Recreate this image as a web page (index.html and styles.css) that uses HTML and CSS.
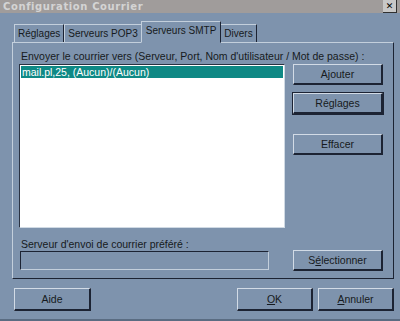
FILE: index.html
```html
<html>
<head>
  <title>Configuration Courrier</title>
  <link rel="stylesheet" href="styles.css">
</head>
<body>
  <div class="window">
    <div class="titlebar">
      <span class="title">Configuration Courrier</span>
      <span class="close">&#x2715;</span>
    </div>
    <div class="dialog">
      <div class="tabs">
        <div class="tab">Réglages</div>
        <div class="tab">Serveurs POP3</div>
        <div class="tab active">Serveurs SMTP</div>
        <div class="tab">Divers</div>
      </div>
      <div class="panel">
        <div class="label">Envoyer le courrier vers (Serveur, Port, Nom d'utilisateur / Mot de passe) :</div>
        <div class="servers">
          <ul class="list">
            <li class="selected">mail.pl,25, (Aucun)/(Aucun)</li>
          </ul>
          <div class="actions">
            <button class="btn">Ajouter</button>
            <button class="btn default">Réglages</button>
            <button class="btn gap">Effacer</button>
          </div>
        </div>
        <div class="label pref">Serveur d'envoi de courrier préféré :</div>
        <div class="prefrow">
          <div class="field"></div>
          <button class="btn">S<u>é</u>lectionner</button>
        </div>
      </div>
      <div class="footer">
        <button class="btn wide">Aide</button>
        <div class="right">
          <button class="btn wide"><u>O</u>K</button>
          <button class="btn wide"><u>A</u>nnuler</button>
        </div>
      </div>
    </div>
  </div>
</body>
</html>
```

FILE: styles.css
```css
body {
  margin: 0;
  background: #7e93ad;
  font: 10.5px "Liberation Sans", Arial, sans-serif;
  color: #161a20;
}
.window {
  width: 400px;
  height: 321px;
  box-sizing: border-box;
  border-bottom: 2px solid #5a6c82;
}
.titlebar {
  height: 13px;
  background: #a09c9b;
  display: flex;
  justify-content: space-between;
  align-items: center;
}
.title {
  margin-left: 3px;
  font: bold 10px "DejaVu Sans", sans-serif;
  letter-spacing: 0.6px;
  color: #d4d4d4;
}
.close {
  width: 13px;
  height: 12px;
  margin-right: 3px;
  background: #c8c8c8;
  border-right: 1px solid #303030;
  border-bottom: 1px solid #303030;
  font: bold 9px "DejaVu Sans", sans-serif;
  text-align: center;
  line-height: 12px;
  color: #000;
}
.dialog {
  padding: 9px 6px 0 12px;
}
.tabs {
  display: flex;
  align-items: flex-end;
  height: 20px;
  padding-left: 2px;
  font-size: 10px;
}
.tab {
  height: 17px;
  line-height: 17px;
  padding: 0 3px;
  border-top: 1px solid #c3cfdc;
  border-left: 1px solid #c3cfdc;
  border-right: 1px solid #1c2333;
}
.tab.active {
  height: 20px;
  line-height: 18px;
  padding: 0 4px;
  margin: 0 -1px -1px;
  position: relative;
  z-index: 1;
  border-bottom: 1px solid #7e93ad;
}
.panel {
  width: 382px;
  height: 237px;
  box-sizing: border-box;
  border-top: 1px solid #c3cfdc;
  border-left: 1px solid #c3cfdc;
  border-right: 1px solid #1c2333;
  border-bottom: 1px solid #1c2333;
  padding: 7px 10px 0 6px;
}
.label {
  height: 14px;
  padding-left: 2px;
}
.servers {
  display: flex;
  justify-content: space-between;
}
.list {
  margin: 0;
  padding: 1px;
  list-style: none;
  width: 266px;
  height: 164px;
  box-sizing: border-box;
  background: #fff;
  border-top: 1px solid #2a3242;
  border-left: 1px solid #2a3242;
  border-right: 1px solid #d0dae4;
  border-bottom: 1px solid #d0dae4;
}
.list li {
  height: 12px;
  line-height: 12px;
  padding-left: 1px;
}
.list li.selected {
  background: #0f8985;
  color: #fff;
}
.actions {
  display: flex;
  flex-direction: column;
  gap: 8px;
}
.btn {
  width: 90px;
  height: 21px;
  padding: 0;
  background: #7e93ad;
  font: 10.5px "Liberation Sans", Arial, sans-serif;
  color: #161a20;
  border-top: 1px solid #d2dbe6;
  border-left: 1px solid #d2dbe6;
  border-right: 2px solid #1c2333;
  border-bottom: 2px solid #1c2333;
}
.btn.default {
  outline: 1px solid #1c2333;
}
.btn.gap {
  margin-top: 12px;
}
.pref {
  margin-top: 10px;
}
.prefrow {
  display: flex;
  justify-content: space-between;
  align-items: center;
  margin-top: -2px;
}
.field {
  width: 249px;
  height: 19px;
  box-sizing: border-box;
  border-top: 1px solid #1c2333;
  border-left: 1px solid #1c2333;
  border-right: 1px solid #c3cfdc;
  border-bottom: 1px solid #c3cfdc;
  margin-left: 1px;
}
.footer {
  display: flex;
  justify-content: space-between;
  margin-top: 9px;
  padding-left: 2px;
}
.right {
  display: flex;
  gap: 5px;
}
.btn.wide {
  width: 77px;
  height: 23px;
}
.right .btn.wide {
  width: 76px;
}
```
